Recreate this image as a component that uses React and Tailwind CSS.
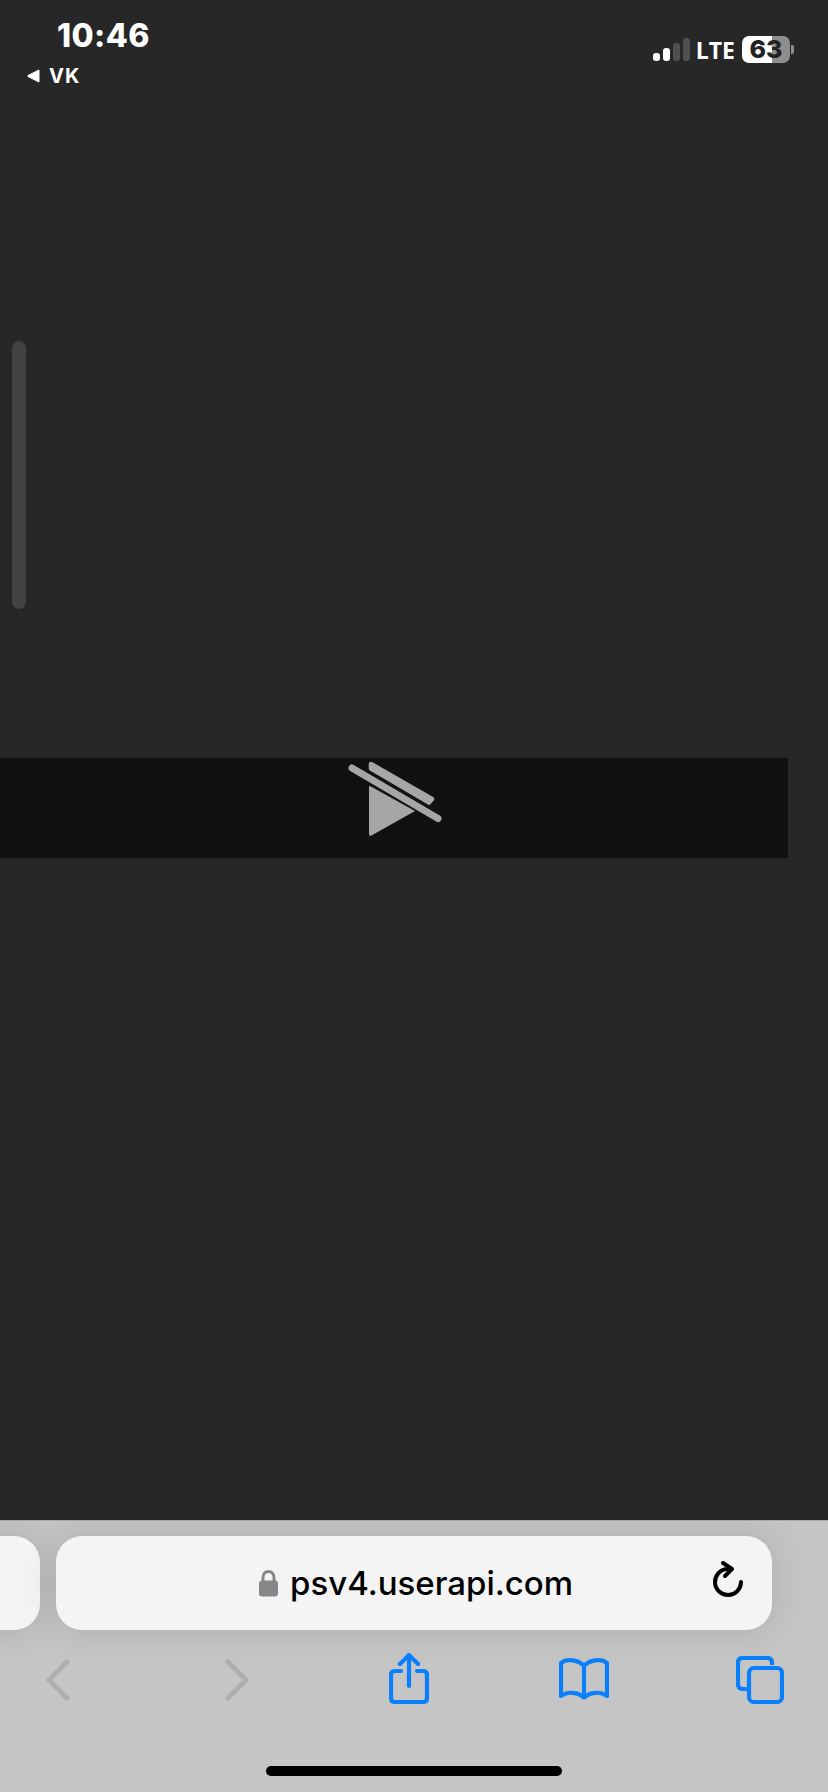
export default function App() {
  const sans = "font-['Inter','Liberation_Sans',sans-serif]";
  return (
    <div className={`relative flex h-[1792px] w-[828px] flex-col overflow-hidden bg-[#272727] ${sans}`}>
      {/* status bar */}
      <header className="flex h-[92px] shrink-0 justify-between text-white">
        <div className="pl-[26px] pt-[16px]">
          <div className="pl-[31px] text-[32px] font-extrabold leading-[40px] tracking-[0.4px]">10:46</div>
          <div className="mt-[8px] flex items-center gap-[9px] text-[20px] font-bold leading-[24px] tracking-[1px]">
            <svg width="14" height="14" viewBox="0 0 14 14"><path d="M13 1 V13 L2 7.5 Q1 7 2 6.5 Z" fill="#fff" stroke="#fff" strokeLinejoin="round" /></svg>
            <span>VK</span>
          </div>
        </div>
        <div className="flex items-start pr-[34px] pt-[36px]">
          <div className="mt-[2px] flex items-end gap-[3px]">
            <span className="h-[8px] w-[7px] rounded-[3px] bg-white" />
            <span className="h-[13px] w-[7px] rounded-[3px] bg-white" />
            <span className="h-[18px] w-[7px] rounded-[3px] bg-[#505050]" />
            <span className="h-[23px] w-[7px] rounded-[3px] bg-[#505050]" />
          </div>
          <span className="ml-[6px] mt-[-1px] font-['Open_Sans'] text-[23px] font-bold leading-[30px] text-white">LTE</span>
          <div className="ml-[7px] flex items-center">
            <div className="flex h-[27px] w-[48px] items-center justify-center rounded-[7px] bg-[linear-gradient(90deg,#ffffff_0,#ffffff_30px,#8e8e8e_30px,#8e8e8e_100%)] text-[25px] font-extrabold leading-none text-[#222]">63</div>
            <span className="ml-[1px] h-[9px] w-[3px] rounded-r-[2px] bg-[#8e8e8e]" />
          </div>
        </div>
      </header>

      {/* page */}
      <main className="relative flex-1">
        <div className="absolute left-[12px] top-[249px] h-[268px] w-[14px] rounded-full bg-[#424242]" />
        <div className="mt-[666px] flex h-[100px] w-[788px] items-center justify-center bg-[#111111]">
          <svg width="100" height="100" viewBox="0 0 100 100" fill="#a6a6a6">
            <path d="M25 29 Q25 27.5 26.5 28.3 L71 53 L27.5 77.5 Q25 78.5 25 76 Z" />
            <path d="M8 10 L94 60.5" stroke="#a6a6a6" strokeWidth="7" strokeLinecap="round" fill="none" />
            <path d="M27 6 L88 41 L85 44.5 L27 10.5 Z" stroke="#a6a6a6" strokeWidth="4.5" strokeLinejoin="round" />
          </svg>
        </div>
      </main>

      {/* safari toolbar */}
      <footer className="flex h-[272px] shrink-0 flex-col border-t border-[#a9a9a9] bg-[#c5c5c5]">
        <div className="mt-[15px] flex h-[94px] gap-[16px]">
          <div className="ml-[-100px] h-[94px] w-[140px] shrink-0 rounded-[26px] bg-[#f4f4f4] shadow-[0_0_36px_rgba(0,0,0,0.13)]" />
          <div className="relative flex h-[94px] w-[716px] shrink-0 items-center rounded-[26px] bg-[#f4f4f4] shadow-[0_0_36px_rgba(0,0,0,0.13)]">
            <div className="ml-[203px] flex items-center">
              <svg width="19" height="27" viewBox="0 0 19 27" className="mt-[1px]">
                <path d="M4 12 V7.5 C4 3.5 6.5 1.5 9.5 1.5 C12.5 1.5 15 3.5 15 7.5 V12" fill="none" stroke="#86868b" strokeWidth="3" />
                <rect x="0" y="10.5" width="19" height="16" rx="3" fill="#86868b" />
              </svg>
              <span className="ml-[12px] text-[33px] font-medium leading-[44px] text-black">psv4.userapi.com</span>
            </div>
            <svg className="absolute left-[656px] top-[25px]" width="32" height="40" viewBox="0 0 32 40" fill="none" stroke="#000" strokeWidth="4" strokeLinecap="round" strokeLinejoin="round">
              <path d="M15 8 A13 13 0 1 0 29 21" />
              <path d="M11 2 L20 8 L13 15" />
            </svg>
          </div>
        </div>
        <nav className="mt-[20px] flex h-[60px] items-center pl-[28px]">
          <div className="flex h-[60px] w-[60px] items-center justify-center">
            <svg width="26" height="42" viewBox="0 0 26 42" fill="none" stroke="#aeaeae" strokeWidth="5" strokeLinecap="round" strokeLinejoin="round"><path d="M22 3 L4 21 L22 39" /></svg>
          </div>
          <div className="ml-[119px] flex h-[60px] w-[60px] items-center justify-center">
            <svg width="26" height="42" viewBox="0 0 26 42" fill="none" stroke="#aeaeae" strokeWidth="5" strokeLinecap="round" strokeLinejoin="round"><path d="M4 3 L22 21 L4 39" /></svg>
          </div>
          <div className="ml-[112px] flex h-[60px] w-[60px] items-center justify-center">
            <svg width="40" height="52" viewBox="0 0 40 52" fill="none" stroke="#0a7ffb" strokeWidth="4.2" strokeLinecap="round" strokeLinejoin="round" className="mt-[-2px]">
              <path d="M12 18 H6 Q2 18 2 22 V45 Q2 49 6 49 H34 Q38 49 38 45 V22 Q38 18 34 18 H28" />
              <path d="M20 33 V3" />
              <path d="M11 11 L20 2 L29 11" />
            </svg>
          </div>
          <div className="ml-[115px] flex h-[60px] w-[60px] items-center justify-center">
            <svg width="50" height="42" viewBox="0 0 50 42" fill="none" stroke="#0a7ffb" strokeWidth="4.2" strokeLinecap="round" strokeLinejoin="round" className="mt-[-2px]">
              <path d="M25 8 C20 2 8 0 2 5 V38 C8 33 19 34 25 39.5 C31 34 42 33 48 38 V5 C42 0 30 2 25 8 Z" />
              <path d="M25 8 V39" />
            </svg>
          </div>
          <div className="ml-[116px] flex h-[60px] w-[60px] items-center justify-center">
            <svg width="48" height="48" viewBox="0 0 48 48" fill="none" stroke="#0a7ffb" strokeWidth="4.2" strokeLinejoin="round" className="mt-[-1px]">
              <path d="M36 9 V7 Q36 2 31 2 H7 Q2 2 2 7 V28 Q2 33 7 33 H12" />
              <rect x="13" y="12" width="33" height="34" rx="5" />
            </svg>
          </div>
        </nav>
        <div className="mt-[auto] mb-[16px] ml-[266px] h-[10px] w-[296px] rounded-full bg-black" />
      </footer>
    </div>
  );
}
